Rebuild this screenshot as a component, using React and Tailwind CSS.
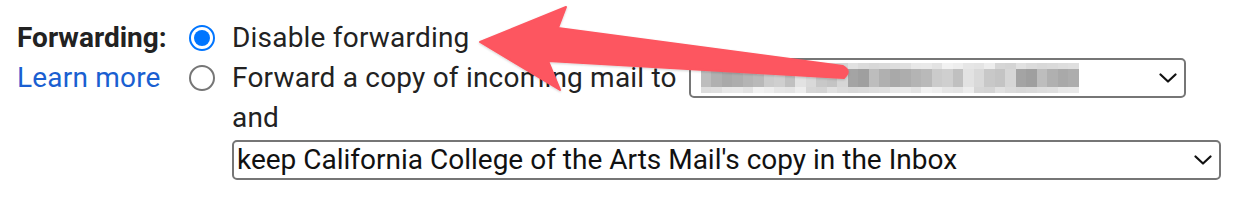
import React from 'react';

// pixelated (blurred) address shown inside the first select
const shades = [
  '#d6d6d6', '#b4b4b4', '#c8c8c8', '#a9a9a9', '#e2e2e2', '#bdbdbd', '#cfcfcf', '#a4a4a4',
  '#b9b9b9', '#c4c4c4', '#adadad', '#d9d9d9', '#b0b0b0', '#c0c0c0', '#9f9f9f', '#cbcbcb',
];

function Mosaic() {
  const cols = 36;
  const rows = [
    { h: 'h-[6px]', offset: 3, light: true },
    { h: 'h-[18px]', offset: 0, light: false },
    { h: 'h-[6px]', offset: 7, light: true },
  ];
  return (
    <div className="flex flex-col">
      {rows.map((r, ri) => (
        <div key={ri} className={`flex ${r.h}`}>
          {Array.from({ length: cols }).map((_, i) => {
            const c = shades[(i * 7 + r.offset + ri * 5) % shades.length];
            return (
              <div
                key={i}
                className="w-[10.5px] h-full"
                style={{ background: c, opacity: r.light ? 0.45 : 1 }}
              />
            );
          })}
        </div>
      ))}
    </div>
  );
}

function Chevron() {
  return (
    <svg width="18" height="10" viewBox="0 0 18 10" fill="none">
      <path d="M1.5 1.5 L9 8.5 L16.5 1.5" stroke="#111" strokeWidth="2.2" strokeLinecap="round" strokeLinejoin="round" />
    </svg>
  );
}

function Radio({ checked }) {
  if (checked) {
    return (
      <div className="w-[26px] h-[26px] rounded-full border-[2px] border-[#0075ff] flex items-center justify-center shrink-0">
        <div className="w-[16px] h-[16px] rounded-full bg-[#0075ff]" />
      </div>
    );
  }
  return <div className="w-[26px] h-[26px] rounded-full border-[2px] border-[#767676] shrink-0" />;
}

export default function App() {
  return (
    <div
      className="relative w-[1234px] h-[212px] bg-white text-[#222] text-[28px] tracking-[0.2px] overflow-hidden"
      style={{ fontFamily: 'Roboto, "Liberation Sans", sans-serif' }}
    >
      <div className="flex pl-[17px] pt-[18px]">
        {/* label column */}
        <div className="w-[168px] shrink-0 flex flex-col leading-[40px]">
          <div className="font-bold tracking-normal">Forwarding:</div>
          <div className="text-[#1a5fd1]">Learn more</div>
        </div>

        {/* options column */}
        <div className="flex flex-col">
          <div className="flex items-center h-[40px] pl-[4px]">
            <Radio checked />
            <span className="ml-[17px]">Disable forwarding</span>
          </div>
          <div className="flex items-center h-[40px] pl-[4px]">
            <Radio />
            <span className="ml-[17px] whitespace-nowrap">Forward a copy of incoming mail to</span>
            <div className="ml-[12px] w-[497px] h-[40px] border-[2px] border-[#767676] rounded-[5px] flex items-center pl-[10px] pr-[7px] shrink-0">
              <Mosaic />
              <div className="flex-1" />
              <Chevron />
            </div>
          </div>
          <div className="h-[40px] leading-[40px] pl-[47px]">and</div>
          <div className="pl-[47px] mt-[2px]">
            <div className="w-[989px] h-[40px] border-[2px] border-[#767676] rounded-[5px] flex items-center pl-[3px] pr-[7px] tracking-normal">
              <span className="flex-1 text-[#111]">keep California College of the Arts Mail's copy in the Inbox</span>
              <Chevron />
            </div>
          </div>
        </div>
      </div>

      {/* red annotation arrow */}
      <svg className="absolute inset-0 pointer-events-none" width="1234" height="212" viewBox="0 0 1234 212">
        <defs>
          <filter id="sh" x="-10%" y="-20%" width="120%" height="140%">
            <feDropShadow dx="0" dy="1" stdDeviation="1" floodColor="#000" floodOpacity="0.18" />
          </filter>
        </defs>
        <path
          d="M480 42 L566 7 L558 28 L843 66 Q852 71 844 78 L548 61 L560 90 Z"
          fill="#fd5660"
          strokeLinejoin="round"
          stroke="#fd5660"
          strokeWidth="2"
          filter="url(#sh)"
        />
      </svg>
    </div>
  );
}
